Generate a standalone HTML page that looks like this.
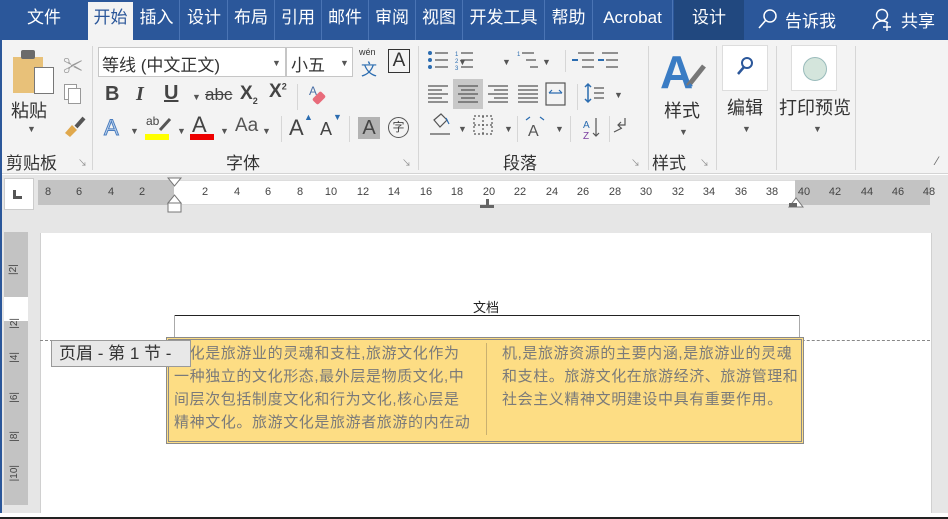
<!DOCTYPE html>
<html><head><meta charset="utf-8"><style>
*{margin:0;padding:0;box-sizing:border-box}
body{width:948px;height:519px;overflow:hidden;background:#fff;font-family:"Liberation Sans","Noto Sans CJK SC",sans-serif;position:relative}
.a{position:absolute;white-space:nowrap}
.tab{position:absolute;top:0;height:40px;line-height:36px;color:#fff;font-size:17px;text-align:center;border-right:1px solid #4a74b4}
.g{color:#333;font-size:17px}
.dd{position:absolute;font-size:9px;color:#555}
.sep{position:absolute;width:1px;background:#d6d6d6}
.rn{position:absolute;top:186px;font-size:11px;color:#444;transform:translateX(-50%)}
.t{position:absolute;font-size:15px;color:#7a7a7a;letter-spacing:0.6px}
</style></head><body>
<div class="a" style="left:0;top:0;width:948px;height:40px;background:#2b579a"></div>
<div class="tab" style="left:4px;width:80px;border:none">文件</div>
<div class="a" style="left:88px;top:2px;width:45px;height:38px;background:#f3f3f3;color:#2b579a;font-size:17px;line-height:32px;text-align:center">开始</div>
<div class="tab" style="left:134px;width:46px">插入</div>
<div class="tab" style="left:181px;width:47px">设计</div>
<div class="tab" style="left:228px;width:47px">布局</div>
<div class="tab" style="left:275px;width:47px">引用</div>
<div class="tab" style="left:322px;width:47px">邮件</div>
<div class="tab" style="left:369px;width:47px">审阅</div>
<div class="tab" style="left:416px;width:47px">视图</div>
<div class="tab" style="left:463px;width:82px">开发工具</div>
<div class="tab" style="left:545px;width:48px">帮助</div>
<div class="tab" style="left:593px;width:80px">Acrobat</div>
<div class="a" style="left:674px;top:0;width:70px;height:40px;background:#21487f"></div>
<div class="tab" style="left:674px;width:70px;border:none">设计</div>
<svg class="a" style="left:757px;top:8px" width="22" height="22"><circle cx="13" cy="8" r="6" fill="none" stroke="#fff" stroke-width="1.5"/><line x1="9" y1="12" x2="2" y2="20" stroke="#fff" stroke-width="1.5"/></svg>
<div class="a" style="left:785px;top:7px;color:#fff;font-size:17px">告诉我</div>
<svg class="a" style="left:872px;top:8px" width="22" height="24"><circle cx="10" cy="7" r="5.5" fill="none" stroke="#fff" stroke-width="1.4"/><path d="M1 21 Q3 13 10 13 Q14 13 16 15" fill="none" stroke="#fff" stroke-width="1.4"/><path d="M15 15v8M11 19h8" stroke="#fff" stroke-width="1.4"/></svg>
<div class="a" style="left:901px;top:7px;color:#fff;font-size:17px">共享</div>
<div class="a" style="left:0;top:40px;width:948px;height:134px;background:#f3f3f3;border-bottom:1px solid #d4d4d4"></div>
<div class="a" style="left:0;top:40px;width:2px;height:479px;background:#2b579a"></div>
<div class="a" style="left:13px;top:57px;width:30px;height:36px;background:#e8c179"></div>
<div class="a" style="left:21px;top:50px;width:14px;height:9px;background:#6b6b6b;border-radius:2px"></div>
<div class="a" style="left:34px;top:67px;width:20px;height:27px;background:#fff;border:1px solid #777"></div>
<div class="a g" style="left:11px;top:97px;font-size:18px">粘贴</div>
<div class="dd" style="left:27px;top:124px">▼</div>
<div class="a" style="left:63px;top:50px;font-size:20px;color:#999">✂</div>
<div class="a" style="left:64px;top:84px;width:13px;height:16px;border:1px solid #999;background:#fff"></div>
<div class="a" style="left:68px;top:88px;width:13px;height:16px;border:1px solid #999;background:#fff"></div>
<svg class="a" style="left:62px;top:115px" width="24" height="24"><path d="M14 12 L22 3" stroke="#555" stroke-width="4"/><path d="M3 18 L10 10 L15 15 L8 22Z" fill="#e0a84c"/></svg>
<div class="a g" style="left:6px;top:149px">剪贴板</div>
<div class="a" style="left:78px;top:156px;font-size:9px;color:#888">↘</div>
<div class="sep" style="left:92px;top:46px;height:124px"></div>
<div class="a" style="left:98px;top:47px;width:188px;height:30px;background:#fff;border:1px solid #c6c6c6"></div>
<div class="a" style="left:102px;top:51px;font-size:17px;color:#333">等线 (中文正文)</div>
<div class="dd" style="left:272px;top:58px">▼</div>
<div class="a" style="left:286px;top:47px;width:67px;height:30px;background:#fff;border:1px solid #c6c6c6"></div>
<div class="a" style="left:291px;top:51px;font-size:17px;color:#333">小五</div>
<div class="dd" style="left:340px;top:58px">▼</div>
<div class="a" style="left:359px;top:47px;font-size:9px;color:#333">wén</div>
<div class="a" style="left:361px;top:56px;font-size:16px;color:#2b6cb0">文</div>
<div class="a" style="left:388px;top:49px;width:22px;height:24px;border:1px solid #333;font-size:19px;line-height:22px;text-align:center;color:#333">A</div>
<div class="a" style="left:105px;top:83px;font-size:20px;font-weight:bold;color:#444">B</div>
<div class="a" style="left:136px;top:83px;font-size:20px;font-style:italic;font-weight:bold;color:#444;font-family:'Liberation Serif'">I</div>
<div class="a" style="left:164px;top:82px;font-size:20px;text-decoration:underline;font-weight:bold;color:#444">U</div>
<div class="dd" style="left:192px;top:92px">▼</div>
<div class="a" style="left:205px;top:85px;font-size:17px;color:#444;text-decoration:line-through">abc</div>
<div class="a" style="left:240px;top:83px;font-size:19px;font-weight:bold;color:#444">X<sub style="font-size:9px">2</sub></div>
<div class="a" style="left:269px;top:81px;font-size:19px;font-weight:bold;color:#444">X<sup style="font-size:9px">2</sup></div>
<div class="sep" style="left:297px;top:84px;height:26px"></div>
<svg class="a" style="left:308px;top:84px" width="22" height="22"><text x="1" y="11" font-size="12" fill="#4a6fa5">A</text><rect x="7" y="8" width="8" height="12" rx="2" fill="#e86b7a" transform="rotate(45 11 14)"/></svg>
<div class="a" style="left:104px;top:115px;font-size:22px;color:#c3d7ef;-webkit-text-stroke:1px #4a7dbf">A</div>
<div class="dd" style="left:130px;top:126px">▼</div>
<div class="a" style="left:146px;top:114px;font-size:12px;color:#444">ab</div>
<svg class="a" style="left:158px;top:116px" width="14" height="16"><path d="M2 14 L12 3" stroke="#555" stroke-width="3"/></svg>
<div class="a" style="left:145px;top:134px;width:24px;height:6px;background:#ffff00"></div>
<div class="dd" style="left:177px;top:126px">▼</div>
<div class="a" style="left:192px;top:112px;font-size:22px;color:#444">A</div>
<div class="a" style="left:190px;top:134px;width:24px;height:6px;background:#e00"></div>
<div class="dd" style="left:220px;top:126px">▼</div>
<div class="a" style="left:235px;top:115px;font-size:19px;color:#555">Aa</div>
<div class="dd" style="left:262px;top:126px">▼</div>
<div class="sep" style="left:281px;top:116px;height:26px"></div>
<div class="a" style="left:289px;top:115px;font-size:22px;color:#444">A</div><div class="dd" style="left:304px;top:112px;color:#2b6cb0">▲</div>
<div class="a" style="left:320px;top:119px;font-size:18px;color:#444">A</div><div class="dd" style="left:333px;top:112px;color:#2b6cb0">▼</div>
<div class="sep" style="left:349px;top:116px;height:26px"></div>
<div class="a" style="left:358px;top:117px;width:22px;height:22px;background:#b3b3b3;font-size:20px;line-height:22px;text-align:center;color:#444">A</div>
<div class="a" style="left:388px;top:117px;width:21px;height:21px;border:1.5px solid #555;border-radius:50%;font-size:12px;line-height:18px;text-align:center;color:#444">字</div>
<div class="a g" style="left:226px;top:149px">字体</div>
<div class="a" style="left:402px;top:156px;font-size:9px;color:#888">↘</div>
<div class="sep" style="left:418px;top:46px;height:124px"></div>
<div class="a" style="left:453px;top:79px;width:30px;height:30px;background:#c8c8c8"></div>
<svg class="a" style="left:426px;top:48px" width="220" height="100" stroke="#555" fill="none" stroke-width="1.2">
<g fill="#2b6cb0" stroke="none"><circle cx="4" cy="5" r="2"/><circle cx="4" cy="12" r="2"/><circle cx="4" cy="19" r="2"/></g>
<path d="M9 5h13M9 12h13M9 19h13"/>
<text x="29" y="8" font-size="6" fill="#2b6cb0" stroke="none">1</text><text x="29" y="15" font-size="6" fill="#2b6cb0" stroke="none">2</text><text x="29" y="22" font-size="6" fill="#2b6cb0" stroke="none">3</text>
<path d="M35 5h12M35 12h12M35 19h12"/>
<text x="91" y="8" font-size="6" fill="#2b6cb0" stroke="none">1</text><path d="M96 5h12M100 12h10M104 19h8"/>
<path d="M152 5h16M156 12h12M156 19h12"/><path d="M176 5h16M180 12h12M180 19h12"/><path d="M172 12h6" stroke="#2b6cb0" stroke-width="2"/><path d="M146 12h6" stroke="#2b6cb0" stroke-width="2"/>
<path d="M2 38h20M2 42h14M2 46h20M2 50h14M2 54h20"/>
<path d="M32 38h20M35 42h14M32 46h20M35 50h14M32 54h20"/>
<path d="M62 38h20M68 42h14M62 46h20M68 50h14M62 54h20"/>
<path d="M92 38h20M92 42h20M92 46h20M92 50h20M92 54h20"/>
<rect x="120" y="35" width="19" height="22"/><path d="M123 45h13M123 45l3-3M136 45l-3-3" stroke="#2b6cb0"/>
<path d="M162 36v18M159 39l3-3 3 3M159 51l3 3 3-3" stroke="#2b6cb0" stroke-width="1.5"/><path d="M168 40h10M168 45h10M168 50h10"/>
<path d="M4 86h20M8 72l7-6 6 6-7 7z"/><path d="M20 70l3 6" stroke="#2b6cb0"/>
<rect x="48" y="68" width="18" height="18" stroke-dasharray="2 2"/><path d="M57 68v18M48 77h18" stroke-dasharray="2 2"/>
<text x="102" y="88" font-size="16" fill="#555" stroke="none">A</text><path d="M100 72l4-3M118 72l-4-3" stroke="#2b6cb0"/>
<text x="157" y="80" font-size="10" fill="#2b6cb0" stroke="none">A</text><text x="157" y="91" font-size="10" fill="#7a3ea0" stroke="none">Z</text><path d="M170 70v18M167 85l3 3 3-3"/>
<path d="M188 84l8-4M199 70v7h-7M195 74l-3 3 3 3"/>
</svg>
<div class="dd" style="left:458px;top:57px">▼</div><div class="dd" style="left:502px;top:57px">▼</div><div class="dd" style="left:542px;top:57px">▼</div>
<div class="dd" style="left:614px;top:90px">▼</div><div class="dd" style="left:458px;top:124px">▼</div><div class="dd" style="left:504px;top:124px">▼</div><div class="dd" style="left:555px;top:124px">▼</div>
<div class="sep" style="left:565px;top:50px;height:22px"></div><div class="sep" style="left:577px;top:84px;height:26px"></div><div class="sep" style="left:517px;top:116px;height:26px"></div><div class="sep" style="left:570px;top:116px;height:26px"></div><div class="sep" style="left:609px;top:116px;height:26px"></div>
<div class="a g" style="left:503px;top:149px">段落</div>
<div class="a" style="left:631px;top:156px;font-size:9px;color:#888">↘</div>
<div class="sep" style="left:648px;top:46px;height:124px"></div>
<svg class="a" style="left:660px;top:48px" width="48" height="46"><text x="0" y="40" font-size="46" font-weight="bold" fill="#3a7cc4">A</text><path d="M28 38 L44 18" stroke="#777" stroke-width="5"/><path d="M26 40l4-5 3 3z" fill="#3a7cc4"/></svg>
<div class="a g" style="left:664px;top:97px;font-size:18px">样式</div>
<div class="dd" style="left:679px;top:127px">▼</div>
<div class="a g" style="left:652px;top:149px">样式</div>
<div class="a" style="left:700px;top:156px;font-size:9px;color:#888">↘</div>
<div class="sep" style="left:716px;top:46px;height:124px"></div>
<div class="a" style="left:722px;top:45px;width:46px;height:46px;background:#fff;border:1px solid #ddd"></div>
<svg class="a" style="left:735px;top:56px" width="20" height="22"><circle cx="12" cy="7" r="5" fill="none" stroke="#2b579a" stroke-width="2"/><path d="M9 11 L3 18" stroke="#2b579a" stroke-width="2.5"/></svg>
<div class="a g" style="left:727px;top:94px;font-size:18px">编辑</div>
<div class="dd" style="left:742px;top:124px">▼</div>
<div class="sep" style="left:776px;top:46px;height:124px"></div>
<div class="a" style="left:791px;top:45px;width:46px;height:46px;background:#fff;border:1px solid #ddd"></div>
<div class="a" style="left:803px;top:57px;width:24px;height:24px;border-radius:50%;background:#d4e5dc;border:1px solid #9bb"></div>
<div class="a g" style="left:779px;top:94px;font-size:18px">打印预览</div>
<div class="dd" style="left:813px;top:124px">▼</div>
<div class="sep" style="left:855px;top:46px;height:124px"></div>
<div class="a" style="left:936px;top:154px;font-size:12px;color:#666">⁄</div>
<div class="a" style="left:2px;top:175px;width:946px;height:344px;background:#e6e6e6"></div>
<div class="a" style="left:4px;top:178px;width:30px;height:32px;background:#fff;border:1px solid #ccc"></div>
<div class="a" style="left:13px;top:190px;width:3px;height:9px;background:#555"></div><div class="a" style="left:13px;top:196px;width:9px;height:3px;background:#555"></div>
<div class="a" style="left:38px;top:180px;width:892px;height:25px;background:#fff;border-top:1px solid #ddd;border-bottom:1px solid #ddd"></div>
<div class="a" style="left:38px;top:180px;width:136px;height:25px;background:#c3c3c3"></div>
<div class="a" style="left:795px;top:180px;width:135px;height:25px;background:#c3c3c3"></div>
<div class="rn" style="left:48px">8</div><div class="rn" style="left:79px">6</div><div class="rn" style="left:111px">4</div><div class="rn" style="left:142px">2</div>
<div class="rn" style="left:205px">2</div><div class="rn" style="left:237px">4</div><div class="rn" style="left:268px">6</div><div class="rn" style="left:300px">8</div><div class="rn" style="left:331px">10</div><div class="rn" style="left:363px">12</div><div class="rn" style="left:394px">14</div><div class="rn" style="left:426px">16</div><div class="rn" style="left:457px">18</div><div class="rn" style="left:489px">20</div><div class="rn" style="left:520px">22</div><div class="rn" style="left:552px">24</div><div class="rn" style="left:583px">26</div><div class="rn" style="left:615px">28</div><div class="rn" style="left:646px">30</div><div class="rn" style="left:678px">32</div><div class="rn" style="left:709px">34</div><div class="rn" style="left:741px">36</div><div class="rn" style="left:772px">38</div><div class="rn" style="left:804px">40</div><div class="rn" style="left:835px">42</div><div class="rn" style="left:867px">44</div><div class="rn" style="left:898px">46</div><div class="rn" style="left:929px">48</div>
<svg class="a" style="left:167px;top:177px" width="16" height="37"><path d="M1 1h13l-6.5 8z" fill="#fff" stroke="#777"/><path d="M1 26l6.5-8 6.5 8z" fill="#fff" stroke="#777"/><rect x="1" y="26" width="13" height="9" fill="#fff" stroke="#777"/></svg>
<div class="a" style="left:486px;top:199px;width:3px;height:7px;background:#666"></div><div class="a" style="left:480px;top:205px;width:14px;height:3px;background:#666"></div>
<svg class="a" style="left:788px;top:196px" width="16" height="12"><path d="M1 11l7-9 7 9z" fill="#fff" stroke="#777"/><rect x="1" y="7" width="8" height="4" fill="#666"/></svg>
<div class="a" style="left:4px;top:232px;width:24px;height:273px;background:#c3c3c3"></div>
<div class="a" style="left:4px;top:297px;width:24px;height:24px;background:#fff"></div>
<div class="a" style="left:9px;top:245px;font-size:10px;color:#444;line-height:10px;writing-mode:vertical-rl;transform:rotate(180deg);height:30px">|2|</div>
<div class="a" style="left:9px;top:318px;font-size:10px;color:#444;writing-mode:vertical-rl;transform:rotate(180deg)">|2|</div>
<div class="a" style="left:9px;top:352px;font-size:10px;color:#444;writing-mode:vertical-rl;transform:rotate(180deg)">|4|</div>
<div class="a" style="left:9px;top:392px;font-size:10px;color:#444;writing-mode:vertical-rl;transform:rotate(180deg)">|6|</div>
<div class="a" style="left:9px;top:431px;font-size:10px;color:#444;writing-mode:vertical-rl;transform:rotate(180deg)">|8|</div>
<div class="a" style="left:9px;top:465px;font-size:10px;color:#444;writing-mode:vertical-rl;transform:rotate(180deg)">|10|</div>
<div class="a" style="left:40px;top:233px;width:892px;height:280px;background:#fff;border-left:1px solid #d0d0d0;border-right:1px solid #d0d0d0"></div>
<div class="a" style="left:0;top:513px;width:948px;height:6px;background:#fff;border-bottom:2px solid #222"></div>
<div class="a" style="left:473px;top:297px;font-size:13px;color:#222">文档</div>
<div class="a" style="left:174px;top:315px;width:626px;height:1px;background:#222"></div>
<div class="a" style="left:174px;top:315px;width:1px;height:25px;background:#aaa"></div>
<div class="a" style="left:799px;top:315px;width:1px;height:25px;background:#aaa"></div>
<div class="a" style="left:40px;top:340px;width:890px;border-top:1px dashed #888"></div>
<div class="a" style="left:166px;top:337px;width:638px;height:107px;background:#fddd84;border:3px double #8a8a8a"></div>
<div class="a" style="left:486px;top:343px;width:1px;height:92px;background:#c9b070"></div>
<div class="t" style="left:174px;top:342px">文化是旅游业的灵魂和支柱,旅游文化作为</div>
<div class="t" style="left:174px;top:365px">一种独立的文化形态,最外层是物质文化,中</div>
<div class="t" style="left:174px;top:388px">间层次包括制度文化和行为文化,核心层是</div>
<div class="t" style="left:174px;top:411px">精神文化。旅游文化是旅游者旅游的内在动</div>
<div class="t" style="left:502px;top:342px">机,是旅游资源的主要内涵,是旅游业的灵魂</div>
<div class="t" style="left:502px;top:365px">和支柱。旅游文化在旅游经济、旅游管理和</div>
<div class="t" style="left:502px;top:388px">社会主义精神文明建设中具有重要作用。</div>
<div class="a" style="left:51px;top:340px;width:140px;height:27px;background:#e8e8e8;border:1px solid #9a9a9a;font-size:17px;color:#333;line-height:25px;padding-left:7px">页眉 - 第 1 节 -</div>
</body></html>
